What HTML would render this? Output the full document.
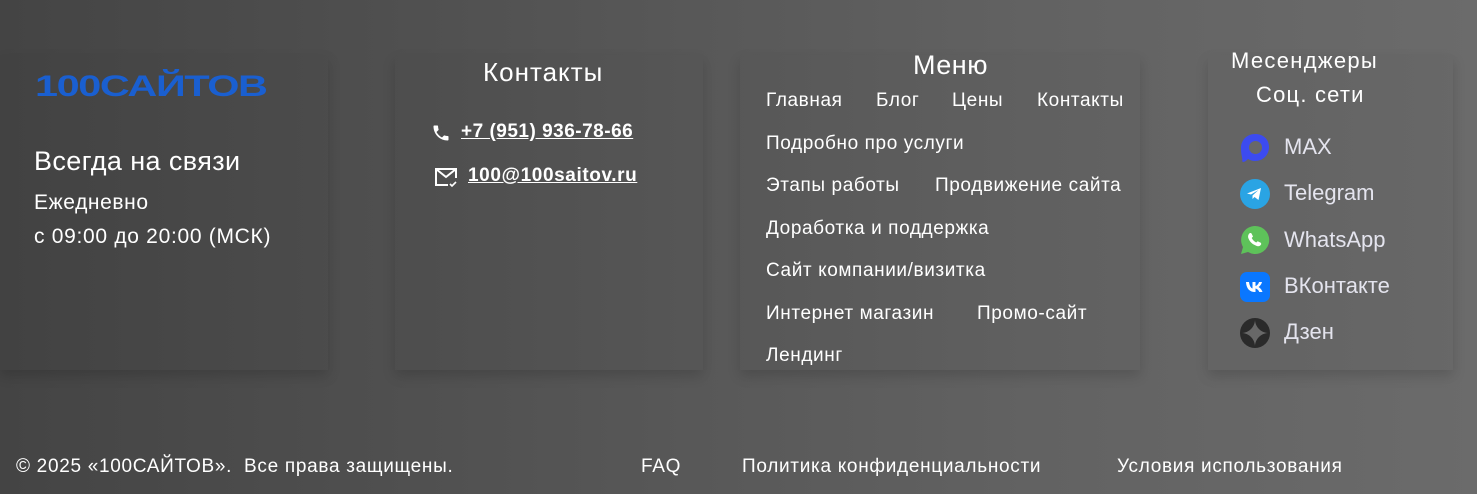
<!DOCTYPE html>
<html><head><meta charset="utf-8"><style>
*{margin:0;padding:0;box-sizing:border-box}
body{width:1477px;height:494px;overflow:hidden;position:relative;background:linear-gradient(90deg,#444 0%,#555 40%,#626262 70%,#6b6b6b 100%);font-family:"Liberation Sans","DejaVu Sans",sans-serif;color:#fff}
.card{position:absolute;top:55px;height:315px;box-shadow:0 6px 12px rgba(0,0,0,.15);background:rgba(0,0,0,.02)}
.t{position:absolute;white-space:nowrap}
.m{font-size:19px;letter-spacing:.6px}
.s{font-size:22px;color:#e4e4ee;font-weight:300}
.f{font-size:19px;letter-spacing:.7px}
a{color:#fff;text-decoration:underline}
</style></head><body>
<div class="card" style="left:0;width:328px"></div>
<div class="card" style="left:395px;width:308px"></div>
<div class="card" style="left:740px;width:400px"></div>
<div class="card" style="left:1208px;width:245px"></div>

<div class="t" style="left:35px;top:70px;font-size:30px;font-weight:900;color:#1a5fd0;letter-spacing:-1px;transform:scaleX(1.38);transform-origin:left">100САЙТОВ</div>
<div class="t" style="left:34px;top:146px;font-size:27px;letter-spacing:.4px">Всегда на связи</div>
<div class="t" style="left:34px;top:191px;font-size:21px;letter-spacing:.6px">Ежедневно</div>
<div class="t" style="left:34px;top:225px;font-size:21px;letter-spacing:.7px">с 09:00 до 20:00 (МСК)</div>

<div class="t" style="left:483px;top:57px;font-size:26px;letter-spacing:1px">Контакты</div>
<svg class="t" style="left:431px;top:123px" width="20" height="20" viewBox="0 0 24 24"><path fill="#fff" d="M6.6 10.8c1.4 2.8 3.8 5.1 6.6 6.6l2.2-2.2c.3-.3.7-.4 1-.2 1.1.4 2.3.6 3.6.6.6 0 1 .4 1 1V20c0 .6-.4 1-1 1C10.6 21 3 13.4 3 4c0-.6.4-1 1-1h3.5c.6 0 1 .4 1 1 0 1.3.2 2.5.6 3.6.1.3 0 .7-.2 1z"/></svg>
<div class="t" style="left:461px;top:121px;font-size:19px;font-weight:bold;letter-spacing:.5px"><a>+7 (951) 936-78-66</a></div>
<svg class="t" style="left:434px;top:167px" width="26" height="22" viewBox="0 0 26 22"><path d="M14 18H2V2h20v9M2 2l10 8 10-8" fill="none" stroke="#fff" stroke-width="2"/><path d="M16 17l2 2 4-4" fill="none" stroke="#fff" stroke-width="1.6"/></svg>
<div class="t" style="left:468px;top:165px;font-size:19px;font-weight:bold;letter-spacing:.6px"><a>100@100saitov.ru</a></div>

<div class="t" style="left:913px;top:50px;font-size:27px;letter-spacing:.5px">Меню</div>
<div class="t m" style="left:766px;top:90px">Главная</div>
<div class="t m" style="left:876px;top:90px">Блог</div>
<div class="t m" style="left:952px;top:90px">Цены</div>
<div class="t m" style="left:1037px;top:90px">Контакты</div>
<div class="t m" style="left:766px;top:133px">Подробно про услуги</div>
<div class="t m" style="left:766px;top:175px">Этапы работы</div>
<div class="t m" style="left:935px;top:175px">Продвижение сайта</div>
<div class="t m" style="left:766px;top:218px">Доработка и поддержка</div>
<div class="t m" style="left:766px;top:260px">Сайт компании/визитка</div>
<div class="t m" style="left:766px;top:303px">Интернет магазин</div>
<div class="t m" style="left:977px;top:303px">Промо-сайт</div>
<div class="t m" style="left:766px;top:345px">Лендинг</div>

<div class="t" style="left:1231px;top:48px;font-size:22px;letter-spacing:1.3px">Месенджеры</div>
<div class="t" style="left:1256px;top:82px;font-size:22px;letter-spacing:1.2px">Соц. сети</div>

<svg class="t" style="left:1240px;top:133px" width="30" height="30" viewBox="0 0 30 30"><path d="M15 1C7 1 1 7 1 15c0 4 .5 7 1 9 .5 3 0 5 1 5 2 0 4-2 5-3 2 1 4 2 7 2 8 0 14-6 14-14S23 1 15 1z" fill="#3c4bf0"/><circle cx="15.5" cy="14.5" r="6.5" fill="#686868"/></svg>
<div class="t s" style="left:1284px;top:134px">MAX</div>
<svg class="t" style="left:1240px;top:179px" width="30" height="30" viewBox="0 0 30 30"><circle cx="15" cy="15" r="15" fill="#2aa4e4"/><path d="M7 14.5l14-5.5-2.5 12-4-3-2 2v-3.5l6-5.5-7.5 4.5z" fill="#fff"/></svg>
<div class="t s" style="left:1284px;top:180px">Telegram</div>
<svg class="t" style="left:1240px;top:225px" width="30" height="30" viewBox="0 0 30 30"><path d="M15 1a14 14 0 1 1-7 26L1 29l2-7A14 14 0 0 1 15 1z" fill="#5ec25a"/><path d="M10 8c1 0 1.5 0 2 1.5l1 2-1.3 1.5c1 2 2.5 3.5 4.5 4.5l1.5-1.3 2 1c1.5.5 1.5 1 1.5 2-1 2-3 2.5-5 1.5C12 19 10 17 8.5 13.5 7.5 11 8.5 9 10 8z" fill="#fff"/></svg>
<div class="t s" style="left:1284px;top:227px">WhatsApp</div>
<svg class="t" style="left:1240px;top:272px" width="30" height="30" viewBox="0 0 30 30"><rect width="30" height="30" rx="7" fill="#0a77ff"/><path d="M6 10h3c.5 4 2 6 3.5 6.5V10h3v4c1.5-.2 3-2 3.5-4h3c-.5 2.5-2.5 4.5-3.5 5 1 .5 3 2 4 5h-3.2c-.8-2-2.3-3.3-3.8-3.5V20h-.5C9.5 20 6.3 16.5 6 10z" fill="#fff"/></svg>
<div class="t s" style="left:1284px;top:273px">ВКонтакте</div>
<svg class="t" style="left:1240px;top:318px" width="30" height="30" viewBox="0 0 30 30"><circle cx="15" cy="15" r="15" fill="#2a2a2a"/><path d="M15 2c.3 7 6 12.7 13 13-7 .3-12.7 6-13 13-.3-7-6-12.7-13-13 7-.3 12.7-6 13-13z" fill="#686868"/></svg>
<div class="t s" style="left:1284px;top:319px">Дзен</div>

<div class="t f" style="left:16px;top:456px">© 2025 «100САЙТОВ».&nbsp; Все права защищены.</div>
<div class="t f" style="left:641px;top:456px">FAQ</div>
<div class="t f" style="left:742px;top:456px">Политика конфиденциальности</div>
<div class="t f" style="left:1117px;top:456px">Условия использования</div>
</body></html>
